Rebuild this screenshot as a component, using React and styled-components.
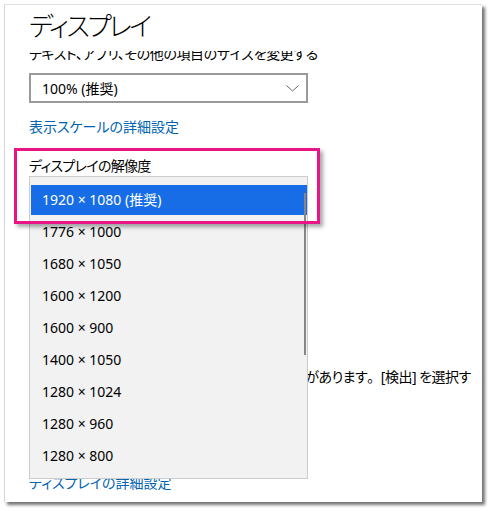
import React from 'react';
import styled, { createGlobalStyle } from 'styled-components';

const GlobalStyle = createGlobalStyle`
    html, body {
        margin: 0;
        padding: 0;
        background: #ffffff;
    }
    body {
        font-family: "Noto Sans", "Noto Sans CJK JP", sans-serif;
        font-feature-settings: "palt";
        color: #000000;
    }
`;

const RESOLUTIONS = [
    '1920 × 1080 (推奨)',
    '1776 × 1000',
    '1680 × 1050',
    '1600 × 1200',
    '1600 × 900',
    '1400 × 1050',
    '1280 × 1024',
    '1280 × 960',
    '1280 × 800',
];

function Chevron() {
    return (
        <svg width="13" height="7" viewBox="0 0 13 7">
            <path d="M0.5 0.5 L6.5 6 L12.5 0.5" fill="none" stroke="#666" strokeWidth="1" />
        </svg>
    );
}

export default function App() {
    return (
        <>
            <GlobalStyle />
            <Page>
                <Panel>
                    <Title>ディスプレイ</Title>
                    <SubtitleClip>
                        <Subtitle>テキスト、アプリ、その他の項目のサイズを変更する</Subtitle>
                    </SubtitleClip>
                    <Select>
                        <span>100% (推奨)</span>
                        <Chevron />
                    </Select>
                    <Link>表示スケールの詳細設定</Link>
                    <Label>ディスプレイの解像度</Label>
                    <Select $gap={4}>
                        <span>1920 × 1080 (推奨)</span>
                        <Chevron />
                    </Select>
                    <Label $top={16}>表示の向き</Label>
                    <Select $gap={4}>
                        <span>横</span>
                        <Chevron />
                    </Select>
                    <Heading>複数のディスプレイ</Heading>
                    <Paragraph>
                        <Line>複数のディスプレイを使用するときの設定です。</Line>
                        <Line>
                            <Hidden>古いディスプレイは 自動的に接続されない場合</Hidden>
                            <Tight>があります<FullWidth>。</FullWidth>[検出] を選択す</Tight>
                        </Line>
                        <Line>ると、接続を試みます。</Line>
                    </Paragraph>
                    <DetectButton>検出</DetectButton>
                    <Link $top={19}>ディスプレイの詳細設定</Link>

                    <DropList>
                        {RESOLUTIONS.map((r, i) => (
                            <Option key={r} $selected={i === 0}>{r}</Option>
                        ))}
                        <ScrollThumb />
                    </DropList>
                    <Highlight />
                </Panel>
            </Page>
        </>
    );
}

const Page = styled.div`
    width: 490px;
    height: 511px;
    padding: 4px 0 0 4px;
    box-sizing: border-box;
`;
const Panel = styled.div`
    position: relative;
    width: 478px;
    height: 498px;
    box-sizing: border-box;
    border-top: 1px solid #e2e2e2;
    border-left: 1px solid #d6d6d6;
    background: #ffffff;
    box-shadow: 3px 3px 3px rgba(0, 0, 0, 0.55);
    padding-left: 24px;
    overflow: hidden;
    display: flex;
    flex-direction: column;
    align-items: flex-start;
`;
const Title = styled.div`
    margin-top: 3px;
    font-size: 26px;
    line-height: 36px;
    font-weight: 300;
    letter-spacing: -2.5px;
`;
const SubtitleClip = styled.div`
    margin-top: 7px;
    height: 11px;
    overflow: hidden;
`;
const Subtitle = styled.div`
    margin-top: -6px;
    font-size: 14px;
    line-height: 18px;
    letter-spacing: -0.4px;
    white-space: nowrap;
`;
const Select = styled.div`
    margin-top: ${p => p.$gap ?? 11}px;
    width: 279px;
    height: 30px;
    box-sizing: border-box;
    border: 2px solid #999999;
    padding: 0 7px 0 11px;
    display: flex;
    align-items: center;
    justify-content: space-between;
    font-size: 14px;
`;
const Link = styled.div`
    margin-top: ${p => p.$top ?? 14}px;
    font-size: 14px;
    line-height: 20px;
    color: #0063b1;
`;
const Label = styled.div`
    margin-top: ${p => p.$top ?? 19}px;
    font-size: 14px;
    line-height: 20px;
    letter-spacing: -0.7px;
`;
const Heading = styled.div`
    margin-top: 20px;
    font-size: 20px;
    line-height: 28px;
`;
const Paragraph = styled.div`
    margin-top: 16px;
    font-size: 14px;
    line-height: 22px;
`;
const Line = styled.div`
    white-space: nowrap;
`;
const Hidden = styled.span`
    letter-spacing: -0.3px;
`;
const Tight = styled.span`
    letter-spacing: -0.5px;
`;
const FullWidth = styled.span`
    font-feature-settings: normal;
`;
const DetectButton = styled.div`
    margin-top: 12px;
    height: 32px;
    padding: 0 24px;
    display: flex;
    align-items: center;
    background: #cccccc;
    font-size: 14px;
`;
const DropList = styled.div`
    position: absolute;
    top: 171px;
    left: 24px;
    width: 279px;
    height: 303px;
    box-sizing: border-box;
    border: 1px solid #cccccc;
    background: #f2f2f2;
    padding: 7px 0 0 1px;
`;
const Option = styled.div`
    height: 32px;
    box-sizing: border-box;
    padding: 1px 0;
    font-size: 14px;
    line-height: 30px;
    text-indent: 11px;
    color: ${p => (p.$selected ? '#ffffff' : '#000000')};
    background-clip: content-box;
    background-color: ${p => (p.$selected ? '#166de6' : 'transparent')};
`;
const ScrollThumb = styled.div`
    position: absolute;
    top: 16px;
    left: 274px;
    width: 2px;
    height: 162px;
    background: #868686;
`;
const Highlight = styled.div`
    position: absolute;
    top: 143px;
    left: 9px;
    width: 306px;
    height: 76px;
    box-sizing: border-box;
    border: 3px solid #ea1489;
    box-shadow: 3px 3px 4px rgba(0, 0, 0, 0.35);
`;
